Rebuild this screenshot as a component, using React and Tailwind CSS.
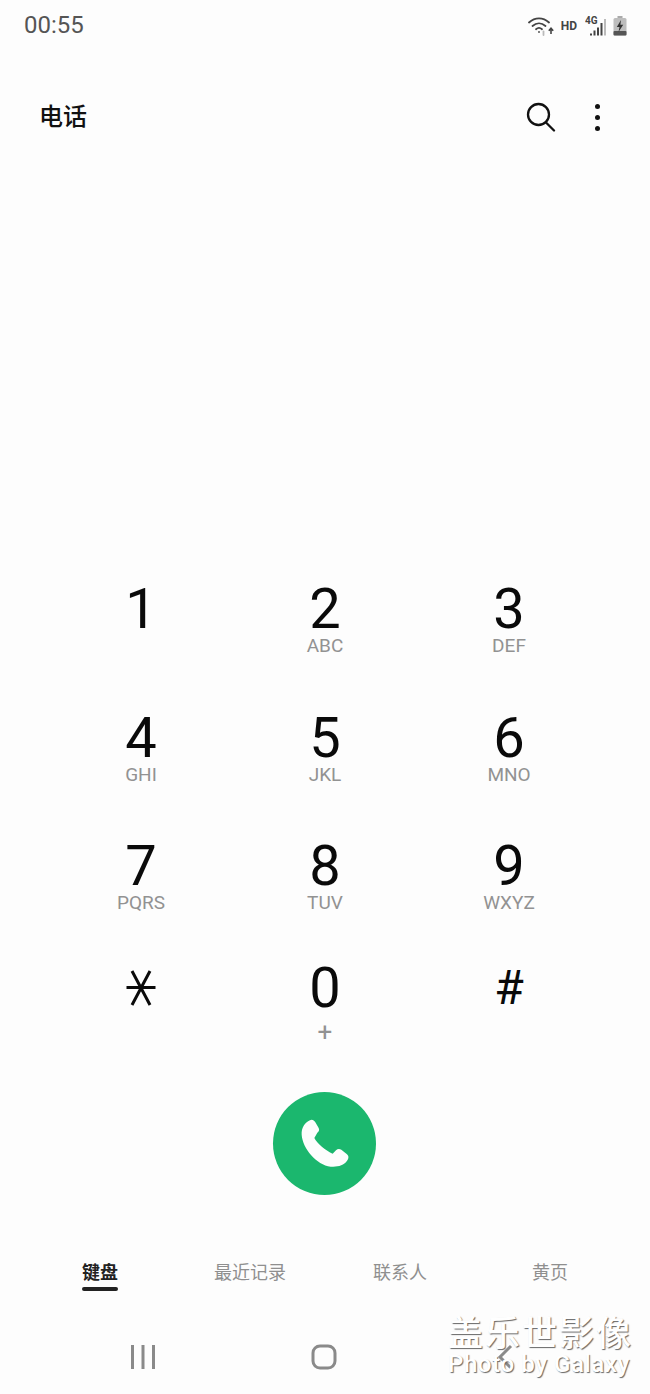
const SANS = "font-['Roboto','Noto_Sans_CJK_SC',sans-serif]";

const keys = [
  ["1", ""], ["2", "ABC"], ["3", "DEF"],
  ["4", "GHI"], ["5", "JKL"], ["6", "MNO"],
  ["7", "PQRS"], ["8", "TUV"], ["9", "WXYZ"],
  ["*", ""], ["0", "+"], ["#", ""],
];

function Star() {
  return (
    <div className="flex items-center justify-center h-[56px]">
      <svg width="30" height="36" viewBox="0 0 30 36" fill="none" stroke="#0a0a0a" strokeWidth="3">
        <path d="M0.5 17.5H29.5M6 1L24 35M24 1L6 35" />
      </svg>
    </div>
  );
}

function Key({ digit, sub }) {
  return (
    <div className="flex flex-col items-center">
      {digit === "*" ? (
        <Star />
      ) : (
        <div className={`mt-[2px] leading-[52px] font-normal text-[#0a0a0a] ${digit === "#" ? "text-[48px]" : "text-[56px]"}`}>{digit}</div>
      )}
      {digit !== "*" && (
        <div className={`leading-[22px] text-[#929292] ${sub === "+" ? "text-[26px] mt-[7px]" : "text-[19px]"}`}>{sub}</div>
      )}
    </div>
  );
}

function StatusIcons() {
  return (
    <div className="flex items-center gap-[8px] mt-[1px] text-[#444]">
      <svg width="27" height="20" viewBox="0 0 27 20" fill="none" stroke="#444" strokeWidth="1.8" strokeLinecap="round" className="mr-[-2px]">
        <path d="M1 6.5C7 1 15 1 21 6.5" />
        <path d="M4.5 10C8.5 6.5 13.5 6.5 17.5 10" />
        <path d="M8 13.2C10 11.5 12 11.5 14 13.2" />
        <circle cx="11" cy="16" r="0.9" fill="#444" stroke="none" />
        <path d="M15.5 15.5V19" stroke="#bbb" />
        <path d="M23 18V12.5M20.8 14.8L23 12.2L25.2 14.8" strokeWidth="1.6" strokeLinecap="butt" />
      </svg>
      <span className="text-[12px] font-bold leading-none mt-[1px]">HD</span>
      <svg width="23" height="20" viewBox="0 0 23 20">
        <text x="0" y="8" fontSize="10" fontWeight="700" fill="#444" fontFamily="Roboto">4G</text>
        <rect x="5" y="17.5" width="2" height="2" fill="#444" />
        <rect x="8.5" y="14.5" width="2" height="5" fill="#444" />
        <rect x="12" y="11.5" width="2" height="8" fill="#444" />
        <rect x="15.5" y="7" width="2" height="12.5" fill="#444" />
        <rect x="19" y="3" width="2" height="16.5" fill="#bbb" />
      </svg>
      <svg width="14" height="20" viewBox="0 0 14 20" className="ml-[-3px]">
        <rect x="4.5" y="0" width="5" height="2" fill="#aaa" />
        <rect x="0.5" y="2" width="13" height="17.5" rx="1.5" fill="#bdbdbd" />
        <rect x="0.5" y="15" width="13" height="4.5" rx="1" fill="#555" />
        <path d="M8 4L3.8 11H6.5L5.5 16L10.2 8.8H7.4Z" fill="#333" />
      </svg>
    </div>
  );
}

export default function App() {
  return (
    <div className={`relative flex flex-col w-[650px] h-[1394px] overflow-hidden bg-[#fdfdfd] ${SANS}`}>
      <div className="flex items-center justify-between shrink-0 h-[50px] pl-[24px] pr-[23px]">
        <span className="text-[24px] leading-none text-[#555]">00:55</span>
        <StatusIcons />
      </div>

      <div className="flex items-center justify-between shrink-0 h-[44px] mt-[45px] pl-[39px] pr-[50px]">
        <span className="text-[24px] font-medium leading-none text-[#111]">电话</span>
        <div className="flex items-center gap-[39px]">
          <svg width="30" height="30" viewBox="0 0 30 30" fill="none" stroke="#111" strokeWidth="2.3" strokeLinecap="round">
            <circle cx="12.5" cy="12.5" r="10.5" />
            <path d="M20 20.5L28 28.5" />
          </svg>
          <div className="flex flex-col gap-[6px]">
            <span className="size-[5px] rounded-full bg-[#111]" />
            <span className="size-[5px] rounded-full bg-[#111]" />
            <span className="size-[5px] rounded-full bg-[#111]" />
          </div>
        </div>
      </div>

      <div className="grid shrink-0 grid-cols-[184px_184px_184px] grid-rows-[128.5px_128.5px_121.5px_132px] ml-[49px] mt-[442px]">
        {keys.map(([d, s]) => (
          <Key key={d} digit={d} sub={s} />
        ))}
      </div>

      <div className="flex shrink-0 justify-center pr-[1px]">
        <div className="flex items-center justify-center size-[103px] rounded-full bg-[#1bb76e]">
          <svg width="50" height="50" viewBox="0 0 150 150" fill="#fdfdfd">
            <path d="M30 7C36 3 42 7 46 13L56 30C59 36 57 40 52 44L43 60C52 78 78 98 98 107L108 97C113 92 118 92 124 95L140 108C147 113 147 122 140 130C132 142 112 148 92 146C50 140 8 92 5 50C4 30 14 14 30 7Z" />
          </svg>
        </div>
      </div>

      <div className="grid shrink-0 grid-cols-4 ml-[25px] w-[600px] mt-[65.5px] text-[18px] leading-[26px] text-[#8f8f8f] text-center">
        <div className="flex flex-col items-center">
          <span className="font-bold text-[#222]">键盘</span>
          <span className="w-[36px] h-[4px] mt-[1px] rounded-full bg-[#222]" />
        </div>
        <div>最近记录</div>
        <div>联系人</div>
        <div>黄页</div>
      </div>

      <div className="grid shrink-0 grid-cols-3 w-[542px] ml-[53px] mt-[51px] justify-items-center items-center h-[30px]">
        <svg width="24" height="24" viewBox="0 0 24 24" stroke="#8a8a8a" strokeWidth="3">
          <path d="M1.5 0V24M12 0V24M22.5 0V24" />
        </svg>
        <svg width="26" height="26" viewBox="0 0 26 26" fill="none" stroke="#8a8a8a" strokeWidth="3">
          <rect x="2" y="2" width="22" height="22" rx="7" />
        </svg>
        <svg width="16" height="26" viewBox="0 0 16 26" fill="none" stroke="#8a8a8a" strokeWidth="3">
          <path d="M14 2L3 13L14 24" />
        </svg>
      </div>

      <div className="absolute left-[448px] top-[1317px] w-[190px] font-medium text-white [text-shadow:1px_1px_1px_#666]">
        <div className="text-[35px] leading-[36px] tracking-[2px] whitespace-nowrap">盖乐世影像</div>
        <div className="text-[24px] leading-[22px] tracking-[0.6px] whitespace-nowrap">Photo by Galaxy</div>
      </div>
    </div>
  );
}
